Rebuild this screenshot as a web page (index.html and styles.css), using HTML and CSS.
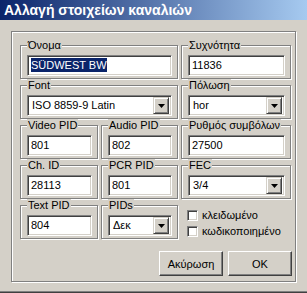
FILE: index.html
```html
<!DOCTYPE html>
<html>
<head>
<meta charset="utf-8">
<link rel="stylesheet" href="styles.css">
</head>
<body>
<div class="window">
  <div class="titlebar">Αλλαγή στοιχείων καναλιών</div>
  <div class="frame">
    <div class="grid">
      <fieldset class="grp span2"><legend>Όνομα</legend><div class="edit"><span class="sel">SÜDWEST BW</span></div></fieldset>
      <fieldset class="grp"><legend>Συχνότητα</legend><div class="edit">11836</div></fieldset>

      <fieldset class="grp span2"><legend>Font</legend><div class="combo"><span class="val">ISO 8859-9 Latin</span><span class="drop"><svg width="7" height="4" viewBox="0 0 7 4"><polygon points="0,0 7,0 3.5,4" fill="#000"/></svg></span></div></fieldset>
      <fieldset class="grp"><legend>Πόλωση</legend><div class="combo"><span class="val">hor</span><span class="drop"><svg width="7" height="4" viewBox="0 0 7 4"><polygon points="0,0 7,0 3.5,4" fill="#000"/></svg></span></div></fieldset>

      <fieldset class="grp"><legend>Video PID</legend><div class="edit">801</div></fieldset>
      <fieldset class="grp"><legend>Audio PID</legend><div class="edit">802</div></fieldset>
      <fieldset class="grp"><legend>Ρυθμός συμβόλων</legend><div class="edit">27500</div></fieldset>

      <fieldset class="grp"><legend>Ch. ID</legend><div class="edit">28113</div></fieldset>
      <fieldset class="grp"><legend>PCR PID</legend><div class="edit">801</div></fieldset>
      <fieldset class="grp"><legend>FEC</legend><div class="combo"><span class="val">3/4</span><span class="drop"><svg width="7" height="4" viewBox="0 0 7 4"><polygon points="0,0 7,0 3.5,4" fill="#000"/></svg></span></div></fieldset>

      <fieldset class="grp"><legend>Text PID</legend><div class="edit">804</div></fieldset>
      <fieldset class="grp"><legend>PIDs</legend><div class="combo"><span class="val">Δεκ</span><span class="drop"><svg width="7" height="4" viewBox="0 0 7 4"><polygon points="0,0 7,0 3.5,4" fill="#000"/></svg></span></div></fieldset>
      <div class="checks">
        <div class="check"><span class="box"></span><span>κλειδωμένο</span></div>
        <div class="check"><span class="box"></span><span>κωδικοποιημένο</span></div>
      </div>
    </div>
    <div class="buttons">
      <div class="push">Ακύρωση</div>
      <div class="push">OK</div>
    </div>
  </div>
</div>
</body>
</html>
```

FILE: styles.css
```css
html, body {
  margin: 0;
  padding: 0;
  background: #d4d0c8;
}
body {
  font-family: "Liberation Sans", Arial, sans-serif;
  font-size: 11px;
  color: #000;
}
.window {
  width: 307px;
  height: 293px;
  box-sizing: border-box;
  background: #d4d0c8;
  border-bottom: 1px solid #404040;
  box-shadow: inset 0 -1px 0 #808080;
  overflow: hidden;
}
.titlebar {
  height: 20px;
  line-height: 21px;
  padding-left: 4px;
  background: linear-gradient(to right, #0a246a, #a6caf0);
  color: #fff;
  font-weight: bold;
  font-size: 14px;
  white-space: nowrap;
}
.frame {
  margin: 11px 0 0 11px;
  width: 285px;
  height: 251px;
  box-sizing: border-box;
  border: 1px solid #808080;
  box-shadow: inset 1px 1px 0 #fff, 1px 1px 0 #fff;
  padding: 7px 4px 0 8px;
}
.grid {
  display: grid;
  grid-template-columns: 78px 77px 110px;
  column-gap: 3px;
  row-gap: 0;
}
.span2 {
  grid-column: span 2;
}
.grp {
  margin: 0;
  padding: 3px 5px 2px 6px;
  min-width: 0;
  border: 1px solid #808080;
  box-shadow: inset 1px 1px 0 #fff, 1px 1px 0 #fff;
}
.grp legend {
  padding: 0 1px;
  margin: 0;
  line-height: 13px;
  background: #d4d0c8;
  white-space: nowrap;
}
.edit, .combo {
  height: 21px;
  box-sizing: border-box;
  border: 1px solid;
  border-color: #808080 #fff #fff #808080;
  box-shadow: inset 1px 1px 0 #404040, inset -1px -1px 0 #d4d0c8;
  background: #fff;
  white-space: nowrap;
  overflow: hidden;
}
.edit {
  padding: 0 3px;
  line-height: 19px;
}
.sel {
  background: #0a246a;
  color: #fff;
  padding: 1px 0;
}
.combo {
  display: flex;
  align-items: center;
  padding: 2px;
}
.combo .val {
  flex: 1;
  padding-left: 2px;
  line-height: 15px;
}
.drop {
  width: 16px;
  height: 17px;
  box-sizing: border-box;
  background: #d4d0c8;
  border: 1px solid;
  border-color: #d4d0c8 #404040 #404040 #d4d0c8;
  box-shadow: inset 1px 1px 0 #fff, inset -1px -1px 0 #808080;
  display: flex;
  align-items: center;
  justify-content: center;
}
.drop svg {
  display: block;
}
.checks {
  display: flex;
  flex-direction: column;
  gap: 4px;
  padding: 10px 0 0 6px;
}
.check {
  display: flex;
  align-items: center;
  gap: 4px;
  height: 12px;
}
.box {
  width: 11px;
  height: 11px;
  box-sizing: border-box;
  border: 1px solid;
  border-color: #808080 #fff #fff #808080;
  box-shadow: inset 1px 1px 0 #404040, inset -1px -1px 0 #d4d0c8;
  background: #fff;
}
.buttons {
  display: flex;
  justify-content: flex-end;
  gap: 5px;
  margin-top: 12px;
  margin-right: -1px;
}
.push {
  width: 64px;
  height: 25px;
  box-sizing: border-box;
  border: 1px solid;
  border-color: #fff #404040 #404040 #fff;
  box-shadow: inset -1px -1px 0 #808080;
  display: flex;
  align-items: center;
  justify-content: center;
}
```
